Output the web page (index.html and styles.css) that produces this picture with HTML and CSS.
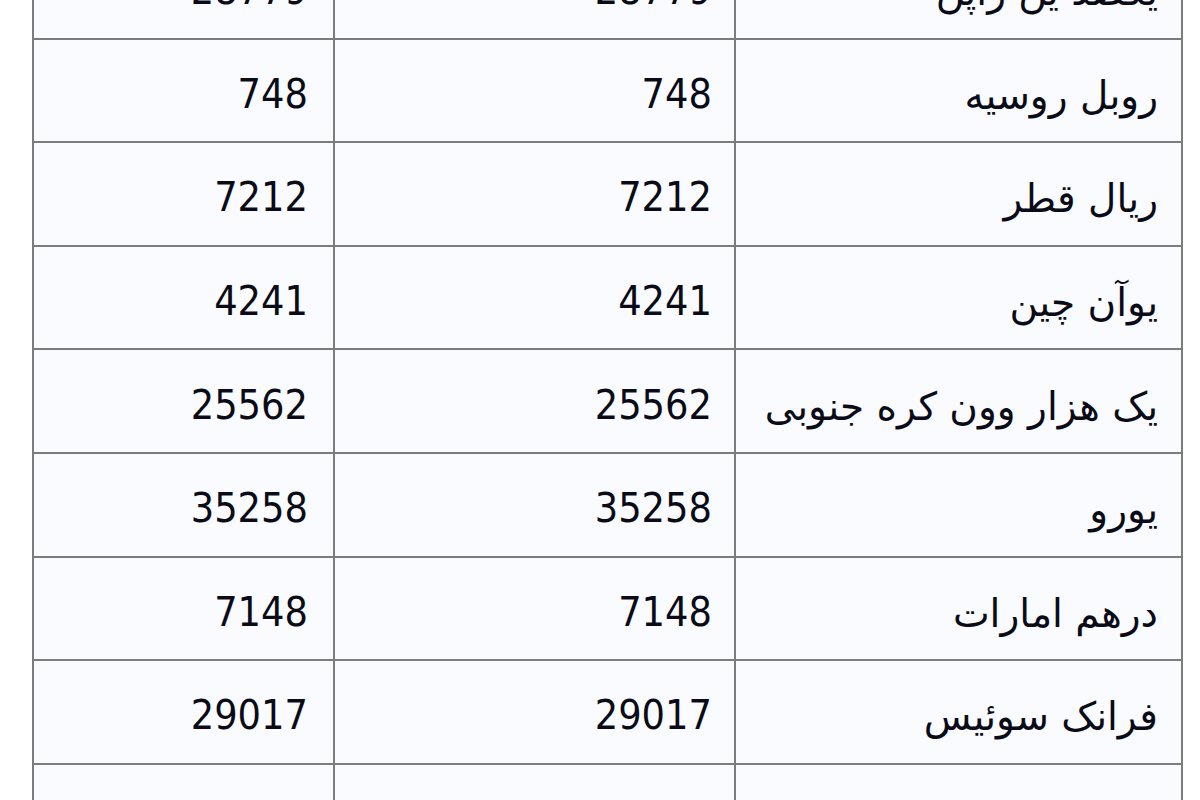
FILE: index.html
```html
<!DOCTYPE html>
<html lang="fa" dir="rtl">
<head>
<meta charset="utf-8">
<title>نرخ ارز</title>
<link rel="stylesheet" href="styles.css">
</head>
<body>
<div class="page">
  <div class="rates">
    <div class="cell name">یکصد ین ژاپن</div><div class="cell num mid">28779</div><div class="cell num end">28779</div>
    <div class="cell name">روبل روسیه</div><div class="cell num mid">748</div><div class="cell num end">748</div>
    <div class="cell name">ریال قطر</div><div class="cell num mid">7212</div><div class="cell num end">7212</div>
    <div class="cell name">یوآن چین</div><div class="cell num mid">4241&nbsp;</div><div class="cell num end">4241&nbsp;</div>
    <div class="cell name">یک هزار وون کره جنوبی</div><div class="cell num mid">25562</div><div class="cell num end">25562</div>
    <div class="cell name">یورو</div><div class="cell num mid">35258</div><div class="cell num end">35258</div>
    <div class="cell name">درهم امارات</div><div class="cell num mid">7148</div><div class="cell num end">7148</div>
    <div class="cell name">فرانک سوئیس</div><div class="cell num mid">29017</div><div class="cell num end">29017</div>
    <div class="cell name">دلار کانادا</div><div class="cell num mid">7148</div><div class="cell num end">7148</div>
  </div>
</div>
</body>
</html>
```
FILE: styles.css
```css
html, body {
  margin: 0;
  padding: 0;
  background: #ffffff;
}
.page {
  width: 1200px;
  height: 800px;
  overflow: hidden;
  direction: rtl;
  padding-right: 17px;
  box-sizing: border-box;
}
.rates {
  margin-top: -66px;
  width: 1151px;
  display: grid;
  grid-template-columns: 445px 399px 299px;
  grid-auto-rows: 101.6px;
  gap: 2px;
  padding: 2px;
  box-sizing: border-box;
  background: #7c7c7c;
}
.cell {
  background: #f9fbfe;
  display: flex;
  align-items: center;
  color: #0b0b18;
  white-space: nowrap;
  box-sizing: border-box;
}
.name {
  font-family: "DejaVu Sans", sans-serif;
  font-size: 39px;
  padding-right: 23px;
  padding-top: 10px;
}
.num {
  font-family: "DejaVu Sans Condensed", "DejaVu Sans", sans-serif;
  font-stretch: condensed;
  font-size: 41px;
  padding-top: 7px;
}
.mid {
  padding-right: 22px;
}
.end {
  padding-right: 25px;
}
```
